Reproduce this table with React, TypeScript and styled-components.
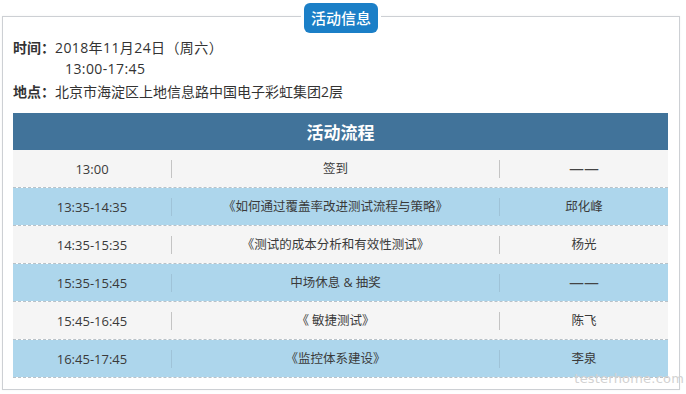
import React from "react";
import styled, { createGlobalStyle } from "styled-components";

const GlobalStyle = createGlobalStyle`
  html, body {
    margin: 0;
    padding: 0;
    background: #ffffff;
  }
  body {
    font-family: "Open Sans", "Noto Sans CJK SC", sans-serif;
    color: #333;
  }
`;

const Page = styled.div`
  padding: 16px 0 0 2px;
  width: 686px;
  height: 394px;
  box-sizing: border-box;
  position: relative;
  overflow: hidden;
`;

const Box = styled.section`
  position: relative;
  width: 678px;
  height: 374px;
  box-sizing: border-box;
  border: 1px solid #cdd0d4;
  box-shadow: 0 0 2px rgba(0, 0, 0, 0.06);
  padding: 19px 10px 0 10px;
`;

const Badge = styled.div`
  position: absolute;
  top: -14px;
  left: 50%;
  transform: translateX(-50%);
  height: 30px;
  line-height: 30px;
  padding: 0 7px;
  background: #1b7fc7;
  color: #ffffff;
  font-family: "Noto Sans CJK SC", sans-serif;
  font-size: 15px;
  font-weight: 500;
  border-radius: 6px;
  box-shadow: 0 0 0 3px #ffffff;
  white-space: nowrap;
`;

const Info = styled.div`
  font-size: 14px;
  line-height: 22px;
  color: #333;
`;

const InfoLine = styled.div<{ $indent?: number }>`
  height: 22px;
  overflow: visible;
  padding-left: ${(p) => p.$indent ?? 0}px;
  white-space: nowrap;
`;

const Value = styled.span`
  letter-spacing: 0.4px;
`;

const Label = styled.b`
  font-family: "Noto Sans CJK SC", sans-serif;
  font-weight: 700;
  color: #333;
`;

const Table = styled.div`
  margin-top: 11px;
  width: 655px;
  background: #ffffff;
`;

const TableHead = styled.div`
  height: 37px;
  line-height: 37px;
  background: #41739a;
  color: #ffffff;
  text-align: center;
  font-family: "Noto Sans CJK SC", sans-serif;
  font-size: 17px;
  font-weight: 700;
`;

const Row = styled.div<{ $alt: boolean }>`
  display: grid;
  grid-template-columns: 158px 328px 169px;
  align-items: center;
  height: 38px;
  box-sizing: border-box;
  border-bottom: 1px dashed #b9c2c8;
  background: ${(p) => (p.$alt ? "#add6ec" : "#f5f5f5")};
  background-clip: padding-box;
  font-size: 12.5px;
  color: #3a3a3a;
`;

const Cell = styled.div<{ $divider?: boolean; $alt?: boolean; $time?: boolean }>`
  text-align: center;
  height: 18px;
  line-height: 18px;
  white-space: nowrap;
  overflow: visible;
  font-size: ${(p) => (p.$time ? "13px" : "inherit")};
  border-left: ${(p) =>
    p.$divider ? `1px solid ${p.$alt ? "#9fc3d8" : "#c4c4c4"}` : "none"};
`;

const Dash = styled.span`
  font-family: "DejaVu Sans", sans-serif;
  font-size: 15px;
  line-height: 18px;
  color: #444;
`;

const Watermark = styled.div`
  position: absolute;
  right: 2px;
  bottom: 8px;
  font-family: "DejaVu Sans", sans-serif;
  font-size: 13px;
  color: #d2d2d2;
  letter-spacing: 0.2px;
`;

const rows = [
  ["13:00", "签到", "——"],
  ["13:35-14:35", "《如何通过覆盖率改进测试流程与策略》", "邱化峰"],
  ["14:35-15:35", "《测试的成本分析和有效性测试》", "杨光"],
  ["15:35-15:45", "中场休息 & 抽奖", "——"],
  ["15:45-16:45", "《 敏捷测试》", "陈飞"],
  ["16:45-17:45", "《监控体系建设》", "李泉"],
];

export default function App() {
  return (
    <>
      <GlobalStyle />
      <Page>
        <Box>
          <Badge>活动信息</Badge>
          <Info>
            <InfoLine>
              <Label>时间：</Label>
              <Value>2018年11月24日（周六）</Value>
            </InfoLine>
            <InfoLine $indent={52}>
              <Value>13:00-17:45</Value>
            </InfoLine>
            <InfoLine>
              <Label>地点：</Label>北京市海淀区上地信息路中国电子彩虹集团2层
            </InfoLine>
          </Info>
          <Table>
            <TableHead>活动流程</TableHead>
            {rows.map((r, i) => {
              const alt = i % 2 === 1;
              return (
                <Row key={i} $alt={alt}>
                  <Cell $time>{r[0]}</Cell>
                  <Cell $divider $alt={alt}>
                    {r[1]}
                  </Cell>
                  <Cell $divider $alt={alt}>
                    {r[2] === "——" ? <Dash>{r[2]}</Dash> : r[2]}
                  </Cell>
                </Row>
              );
            })}
          </Table>
        </Box>
        <Watermark>testerhome.com</Watermark>
      </Page>
    </>
  );
}
